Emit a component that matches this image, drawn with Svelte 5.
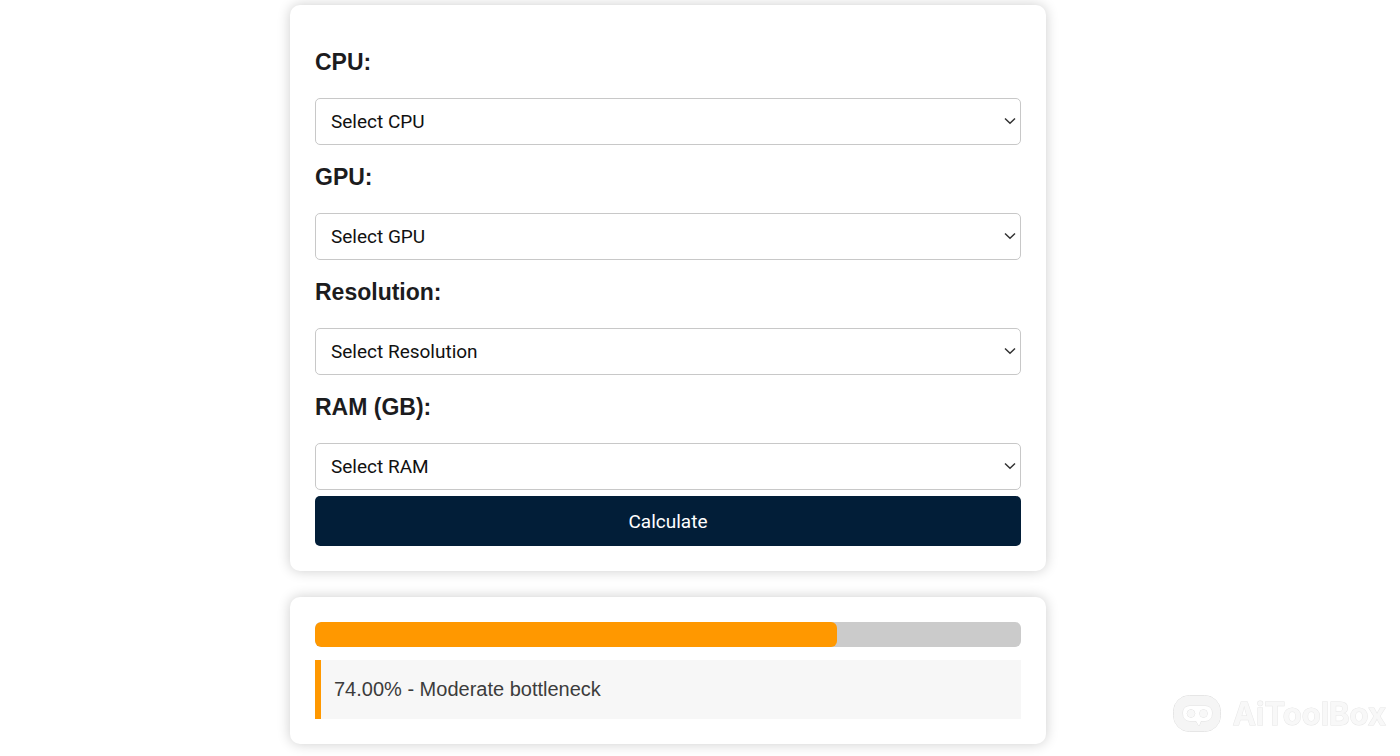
<script>
    let fields = [
        { id: 'cpu', label: 'CPU:', placeholder: 'Select CPU', options: ['Intel Core i5', 'Intel Core i7', 'AMD Ryzen 5', 'AMD Ryzen 7'] },
        { id: 'gpu', label: 'GPU:', placeholder: 'Select GPU', options: ['GeForce RTX 3060', 'GeForce RTX 4070', 'Radeon RX 6700 XT'] },
        { id: 'resolution', label: 'Resolution:', placeholder: 'Select Resolution', options: ['1080p', '1440p', '4K'] },
        { id: 'ram', label: 'RAM (GB):', placeholder: 'Select RAM', options: ['8', '16', '32', '64'] },
    ];

    let values = { cpu: '', gpu: '', resolution: '', ram: '' };
    let bottleneck = 74;

    $: level = bottleneck < 40 ? 'Low' : bottleneck < 80 ? 'Moderate' : 'High';

    function calculate(){
        const picked = fields.map( f => f.options.indexOf(values[f.id]) )

        if(picked.includes(-1)){
            return
        }
        bottleneck = Math.min(100, Math.abs(picked[0] - picked[1]) * 20 + picked[2] * 10 + 14)
    }
</script>

<main>
    <form class="card" on:submit|preventDefault={calculate}>
        {#each fields as field (field.id)}
        <label for={field.id}>{field.label}</label>
        <div class="select-wrap">
            <select id={field.id} bind:value={values[field.id]}>
                <option value="">{field.placeholder}</option>
                {#each field.options as option}
                <option value={option}>{option}</option>
                {/each}
            </select>
            <svg class="chevron" viewBox="0 0 12 8" aria-hidden="true">
                <path d="M1 1.5 L6 6.2 L11 1.5" />
            </svg>
        </div>
        {/each}
        <button type="submit">Calculate</button>
    </form>

    <section class="card">
        <div class="bar">
            <div class="bar-fill" style="width: {bottleneck}%"></div>
        </div>
        <p class="result">{bottleneck.toFixed(2)}% - {level} bottleneck</p>
    </section>
</main>

<div class="brand">
    <svg viewBox="0 0 48 38" aria-hidden="true">
        <rect class="head" x="0.5" y="0.5" width="47" height="36" rx="16" />
        <path class="face" d="M17 11 H32 Q39 11 39 18 Q39 26 32 26 H28 L26 31 L23 26 H17 Q10 26 10 18 Q10 11 17 11 Z" />
        <circle class="eye" cx="18" cy="18.5" r="3.8" />
        <circle class="eye" cx="30.5" cy="18.5" r="3.8" />
    </svg>
    <span>AiToolBox</span>
</div>

<style>
    :global(body){
        background: #fff;
        font-family: "Liberation Sans", Arial, sans-serif;
    }

    main{
        width: 54%;
        margin-left: calc(23% - 32px);
        padding: 5px 0 12px;
        display: flex;
        flex-direction: column;
        gap: 26px;
    }

    .card{
        display: flex;
        flex-direction: column;
        padding: 25px;
        border-radius: 10px;
        background: #fff;
        box-shadow: 0 0 13px rgba(0, 0, 0, 0.2);
    }

    label{
        padding: 20px 0 24px;
        font-size: 23px;
        line-height: 24px;
        font-weight: 700;
        color: #1c1c1e;
    }

    .select-wrap{
        position: relative;
    }

    select{
        display: block;
        appearance: none;
        width: 100%;
        height: 47px;
        padding: 0 15px 1px;
        border: 1px solid #c8c8c8;
        border-radius: 5px;
        background: #fff;
        color: #111;
        font-family: Roboto, sans-serif;
        font-size: 19px;
    }

    .chevron{
        position: absolute;
        top: 19px;
        right: 5px;
        width: 12px;
        height: 8px;
        pointer-events: none;
    }

    .chevron path{
        fill: none;
        stroke: #333;
        stroke-width: 1.5;
    }

    button{
        height: 50px;
        margin-top: 6px;
        border: none;
        border-radius: 5px;
        background: #021e38;
        color: #fff;
        font-family: Roboto, sans-serif;
        font-size: 19px;
        cursor: pointer;
    }

    .bar{
        height: 25px;
        border-radius: 6px;
        background: #cbcbcb;
        overflow: hidden;
    }

    .bar-fill{
        height: 100%;
        border-radius: 6px;
        background: #ff9800;
    }

    .result{
        margin: 13px 0 0;
        padding: 18px 13px;
        border-left: 6px solid #ff9800;
        background: #f7f7f7;
        color: #3c3c3c;
        font-size: 20px;
        line-height: 23px;
    }

    .brand{
        position: fixed;
        right: 14px;
        bottom: 23px;
        display: flex;
        align-items: center;
        gap: 12px;
        color: #f8f8f8;
        font-family: Inter, sans-serif;
        font-size: 31px;
        line-height: 38px;
        font-weight: 700;
        pointer-events: none;
        -webkit-text-stroke: 1px #e6e6e6;
        paint-order: stroke fill;
    }

    .brand svg{
        width: 48px;
        height: 38px;
    }

    .head{
        fill: #f5f5f5;
        stroke: #d6d6d6;
    }

    .face{
        fill: #fff;
        stroke: #e2e2e2;
    }

    .eye{
        fill: #f8f8f8;
        stroke: #dedede;
    }
</style>
